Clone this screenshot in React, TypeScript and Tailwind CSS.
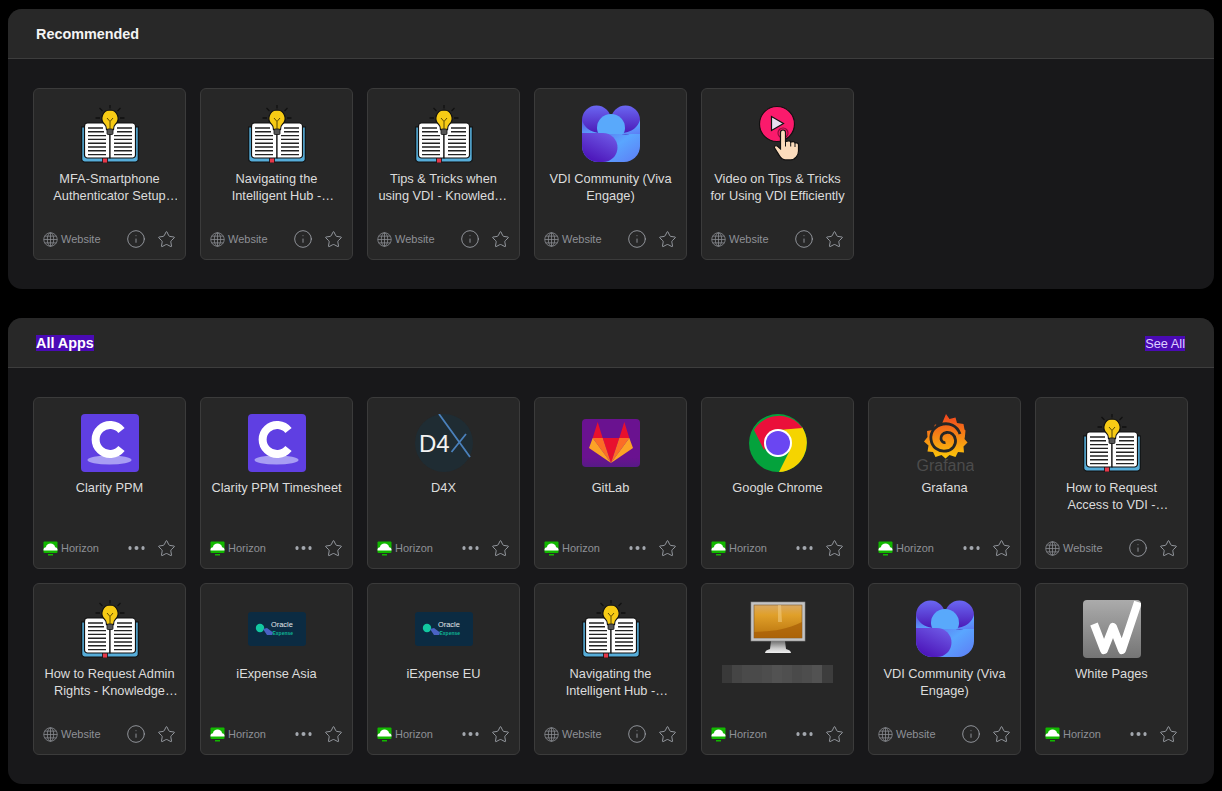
import { Info, Star } from 'lucide-react';
import { ReactNode } from 'react';

const BookIcon = () => (
  <svg viewBox="0 0 58 58" className="w-full h-full">
    <path d="M.7 22h56.600v32a3 3 0 0 1-3 3h-50.600a3 3 0 0 1-3-3z" fill="#56add9" stroke="#111" strokeWidth="1.200" />
    <rect x="21.500" y="52" width="5" height="6" fill="#e5394a" stroke="#111" strokeWidth="0.800" />
    <path d="M3.500 21a3 3 0 0 1 3-3h20.500a2 2 0 0 1 2 2v33H6.500a3 3 0 0 1-3-3z" fill="#fff" stroke="#111" strokeWidth="1.200" />
    <path d="M54.500 21a3 3 0 0 0-3-3H31a2 2 0 0 0-2 2v33h22.500a3 3 0 0 0 3-3z" fill="#fff" stroke="#111" strokeWidth="1.200" />
    <path d="M7 23h15M7 26.800h16M7 30.600h18M7 34.400h18M7 38.200h18M7 42h18M7 45.800h18M7 49.600h18M36 23h15M36 26.800h15M33 30.600h18M33 34.400h18M33 38.200h18M33 42h18M33 45.800h18M33 49.600h18" stroke="#222" strokeWidth="1.400" />
    <path d="M29 0v3.500M14.500 13h4.500M39 13h4.500M18.500 3l3 3M39.500 3l-3 3" stroke="#111" strokeWidth="1.300" />
    <path d="M29 5a8.300 8.300 0 0 1 5.200 14.600c-1.400 1.300-1.700 3-1.700 5h-7c0-2-.3-3.700-1.700-5A8.300 8.300 0 0 1 29 5z" fill="#f7cb15" stroke="#111" strokeWidth="1.200" />
    <path d="M26 13l3 3.500 3-3.500M29 16.500V24" fill="none" stroke="#5c4a05" strokeWidth="1" />
    <rect x="26" y="24" width="6" height="5.500" rx="1" fill="#555" stroke="#111" strokeWidth="0.800" />
  </svg>
);

const VivaIcon = () => (
  <svg viewBox="0 0 58 58" className="w-full h-full">
    <defs>
      <linearGradient id="vivaTop" x1="0" y1="0" x2="0" y2="1">
        <stop offset="0" stopColor="#6a67f2" />
        <stop offset="1" stopColor="#4a16b4" />
      </linearGradient>
      <linearGradient id="vivaBody" x1="0" y1="0" x2="1" y2="1">
        <stop offset="0" stopColor="#5c4fe0" />
        <stop offset="0.6" stopColor="#5aa6ff" />
        <stop offset="1" stopColor="#5d7cf5" />
      </linearGradient>
      <linearGradient id="vivaLeft" x1="0.8" y1="0" x2="0.2" y2="1">
        <stop offset="0" stopColor="#6e5ae6" />
        <stop offset="1" stopColor="#4a10b6" />
      </linearGradient>
    </defs>
    <path d="M0 15h58v26a16 16 0 0 1-16 16H16A16 16 0 0 1 0 41z" fill="url(#vivaBody)" />
    <circle cx="14.500" cy="15" r="14.500" fill="url(#vivaTop)" />
    <circle cx="43.500" cy="15" r="14.500" fill="url(#vivaTop)" />
    <path d="M0 15c3 9 10 14 29 14s26-5 29-14v14H0z" fill="url(#vivaBody)" />
    <path d="M15 23a14 14 0 0 1 28 0c0 3-1 5-2 6H17c-1-1-2-3-2-6z" fill="#59a9fb" />
    <path d="M0 28h21a14.500 14.500 0 0 1 0 29h-5A16 16 0 0 1 0 41z" fill="url(#vivaLeft)" />
  </svg>
);

const VideoIcon = () => (
  <svg viewBox="0 0 58 58" className="w-full h-full">
    <circle cx="28" cy="19" r="17.500" fill="#fb1a6c" stroke="#111" strokeWidth="1.200" />
    <path d="M22.500 11.500v14l12-7z" fill="#e8dff0" stroke="#111" strokeWidth="1.200" />
    <circle cx="34" cy="28" r="5" fill="none" stroke="#8a0f3d" strokeWidth="1.200" />
    <path d="M31.500 27.500a2.500 2.500 0 0 1 5 0v9l3-.5c1-.3 2 .2 2.200 1l2.300-.3c1-.1 1.800.4 2 1.200l1.500 0c1 0 2 1 2 2v6c0 4-3 9-8 9h-5c-3 0-4.500-1.500-6-4l-5-8c-.7-1.200 1-3 2.500-2l3.500 3z" fill="#fbdcbc" stroke="#111" strokeWidth="1.200" />
    <path d="M36.500 36.500v5M41.700 37v4.500M46 38v4" stroke="#111" strokeWidth="1" />
  </svg>
);

const ClarityIcon = () => (
  <svg viewBox="0 0 58 58" className="w-full h-full">
    <rect width="58" height="58" rx="4" fill="#5f3fe2" />
    <ellipse cx="28.500" cy="46" rx="22" ry="4.500" fill="#a89df3" />
    <path d="M40.500 16.500A14.500 14.500 0 1 0 40.500 34.500" fill="none" stroke="#fff" strokeWidth="8" />
  </svg>
);

const D4xIcon = () => (
  <svg viewBox="0 0 58 58" className="w-full h-full">
    <circle cx="29" cy="29" r="29" fill="#1f2c33" />
    <text x="4" y="38" fontSize="24" fill="#f2f2f2" fontFamily="Liberation Sans, sans-serif">D4</text>
    <path d="M24 0l31 43M36.500 38L51 20" stroke="#4a80bb" strokeWidth="1.800" />
  </svg>
);

const GitlabIcon = () => (
  <svg viewBox="0 0 58 58" className="w-full h-full">
    <defs>
      <linearGradient id="glBg" x1="0" y1="0" x2="0" y2="1">
        <stop offset="0" stopColor="#6a1290" />
        <stop offset="0.8" stopColor="#6a1290" />
        <stop offset="1" stopColor="#571a86" />
      </linearGradient>
    </defs>
    <rect x="0" y="5" width="58" height="48" rx="4" fill="url(#glBg)" />
    <path d="M10.700 24L15.700 8l5 16zM47.300 24l-5-16-5 16z" fill="#e8102e" />
    <path d="M20.700 24h16.600L29 49z" fill="#e8102e" />
    <path d="M10.700 24h10L29 49zM47.300 24h-10L29 49z" fill="#fc6d26" />
    <path d="M10.700 24L7 34l22 15zM47.300 24L51 34 29 49z" fill="#fca326" />
  </svg>
);

const ChromeIcon = () => (
  <svg viewBox="0 0 58 58" className="w-full h-full">
    <circle cx="29" cy="29" r="29" fill="#04a23c" />
    <path d="M53 13A29 29 0 0 1 30 58l10-20 -11-22z" fill="#f5d400" />
    <path d="M5 16A29 29 0 0 1 53.500 14L29 16 15 36z" fill="#ea0f3a" />
    <circle cx="29" cy="29" r="14" fill="#fff" />
    <circle cx="29" cy="29" r="12" fill="#6a46f2" />
  </svg>
);

const GrafanaIcon = () => (
  <svg viewBox="0 0 58 58" className="w-full h-full">
    <defs>
      <linearGradient id="grafana" x1="0" y1="0" x2="0" y2="1">
        <stop offset="0" stopColor="#f0431f" />
        <stop offset="1" stopColor="#fcc80a" />
      </linearGradient>
    </defs>
    <path d="M30 0l3.500 5 6-1.500 1.500 5.500 6.500 1 1 5.500 1 1-.5 5.500-.5 3 3 3.500-4 4 .5 6-6-.5-2.500 5-6-2-4 3.500-4-3.500-6 2-2.500-5-5.500-.5 1-6-4.500-4 3.500-4.500-.5-6 6-1 2-5.500 6 1.500z" fill="url(#grafana)" />
    <path d="M44 20C41 11 33 9 27 10c-8 1.500-13 8-12 15.500 1 7.500 7 12.500 15 11.500 6.500-.8 10-6 9.500-11-.5-5-4.500-8-9-7.500-4 .5-6 3.500-5.500 6.500.4 2.500 2.500 4 4.500 3.500" fill="none" stroke="#262626" strokeWidth="2.800" />
    <text x="0.500" y="57" fontSize="16" fill="#4c4c4c" fontFamily="Liberation Sans, sans-serif">Grafana</text>
  </svg>
);

const OracleIcon = () => (
  <svg viewBox="0 0 58 58" className="w-full h-full">
    <rect x="0" y="12" width="58" height="34" rx="3" fill="#0b2b42" />
    <circle cx="12" cy="28" r="4.200" fill="#12c7a0" />
    <path d="M15 29l4-1 6 4.500-1 2.500h-5z" fill="#4a62c4" />
    <text x="23" y="27" fontSize="7.400" fill="#e4e8ea" fontFamily="Liberation Sans, sans-serif">Oracle</text>
    <text x="24.500" y="35" fontSize="5" fontWeight="700" fill="#0fb394" fontFamily="Liberation Sans, sans-serif">Expense</text>
  </svg>
);

const MonitorIcon = () => (
  <svg viewBox="0 0 58 58" className="w-full h-full">
    <defs>
      <linearGradient id="screen" x1="0" y1="0" x2="0" y2="1">
        <stop offset="0" stopColor="#d9a862" />
        <stop offset="0.3" stopColor="#e0a02a" />
        <stop offset="1" stopColor="#b8720c" />
      </linearGradient>
      <linearGradient id="stand" x1="0" y1="0" x2="0" y2="1">
        <stop offset="0" stopColor="#6f6f6f" />
        <stop offset="0.6" stopColor="#c9c9c9" />
        <stop offset="1" stopColor="#f0f0f0" />
      </linearGradient>
    </defs>
    <path d="M22 41h14l1 8c3 .8 5 2 5 4H16c0-2 2-3.200 5-4z" fill="url(#stand)" />
    <rect x="2" y="2" width="54" height="39" fill="#c4c4c4" stroke="#8d8d8d" strokeWidth="0.600" />
    <rect x="5" y="5" width="48" height="33" fill="url(#screen)" stroke="#7d5a30" strokeWidth="0.600" />
    <path d="M29 5h3l1 17h-4z" fill="#f4d28c" opacity="0.500" />
    <path d="M5 38v-6c16-1 30-1 48-10v16z" fill="#a65c06" opacity="0.700" />
  </svg>
);

const WhitePagesIcon = () => (
  <svg viewBox="0 0 58 58" className="w-full h-full">
    <defs>
      <linearGradient id="wp" x1="0" y1="0" x2="0" y2="1">
        <stop offset="0" stopColor="#ababab" />
        <stop offset="1" stopColor="#757575" />
      </linearGradient>
    </defs>
    <rect width="58" height="58" rx="4" fill="url(#wp)" />
    <path d="M11 24l10 26 9-23 9 23L55 2" fill="none" stroke="#fff" strokeWidth="8" strokeLinejoin="round" />
  </svg>
);

const GlobeIcon = () => (
  <svg viewBox="0 0 16 16" className="w-[15px] h-[15px] shrink-0" fill="none" stroke="#8e9096" strokeWidth="0.800">
    <circle cx="8" cy="8" r="7.200" />
    <ellipse cx="8" cy="8" rx="3.400" ry="7.200" />
    <path d="M8 .8v14.400M.8 8h14.400M1.700 4.400h12.600M1.700 11.600h12.600" />
  </svg>
);

const HorizonIcon = () => (
  <svg viewBox="0 0 15 15" className="w-[15px] h-[15px] shrink-0">
    <rect x="0.500" y="0.500" width="14" height="11.500" rx="1" fill="#12b800" />
    <path d="M0.500 9.500h14v-1c0-1.300-1-2.300-2.400-2.300C11.700 3.900 9.800 2.600 7.500 2.600S3.300 3.900 2.900 6.200C1.500 6.200.5 7.200.5 8.500z" fill="#fff" />
    <rect x="5" y="13" width="5" height="1.500" fill="#12b800" />
  </svg>
);

const RedactedName = () => (
  <div className="flex h-[18px] w-[111px] mx-auto">
    <div className="w-[10px] bg-[#393939]" />
    <div className="w-[10px] bg-[#454545]" />
    <div className="w-[20px] bg-[#4a4a4a]" />
    <div className="w-[10px] bg-[#4d4d4d]" />
    <div className="w-[10px] bg-[#525252]" />
    <div className="w-[10px] bg-[#4f4f4f]" />
    <div className="w-[10px] bg-[#4a4a4a]" />
    <div className="w-[10px] bg-[#4d4d4d]" />
    <div className="w-[10px] bg-[#525252]" />
    <div className="w-[11px] bg-[#3d3d3d]" />
  </div>
);

interface AppI {
  name?: string;
  icon: ReactNode;
  type: 'Website' | 'Horizon';
}

const AppCard = ({ app }: { app: AppI }) => (
  <div className="h-[172px] rounded-md border border-solid border-[#3b3b3b] bg-[#272727] flex flex-col pt-4">
    <div className="w-[58px] h-[58px] mx-auto">{app.icon}</div>
    <div className="mt-[7px] px-2 h-[34px] text-center text-[12.800px] leading-[17px] text-[#dcdcdc]">
      {app.name ? <p className="line-clamp-2">{app.name}</p> : <RedactedName />}
    </div>
    <div className="mt-auto mb-[10px] pl-[9px] pr-[9px] h-5 flex items-center">
      {app.type === 'Website' ? <GlobeIcon /> : <HorizonIcon />}
      <span className="ml-[3px] text-[11px] text-[#8e9096]">{app.type}</span>
      <div className="ml-auto w-5 flex justify-center">
        {app.type === 'Website' ? (
          <Info size={20} strokeWidth={1} className="text-[#a3a7ae]" />
        ) : (
          <div className="flex gap-[3px] translate-x-[0.5px]">
            <span className="w-[3.500px] h-[3.500px] rounded-full bg-[#a3a7ae]" />
            <span className="w-[3.500px] h-[3.500px] rounded-full bg-[#a3a7ae]" />
            <span className="w-[3.500px] h-[3.500px] rounded-full bg-[#a3a7ae]" />
          </div>
        )}
      </div>
      <Star size={19} strokeWidth={1.100} className="ml-[10.500px] mr-[0.5px] text-[#a3a7ae]" />
    </div>
  </div>
);

const recommended: AppI[] = [
  { name: 'MFA-Smartphone Authenticator Setup Guide', icon: <BookIcon />, type: 'Website' },
  { name: 'Navigating the Intelligent Hub - Knowledge Base', icon: <BookIcon />, type: 'Website' },
  { name: 'Tips & Tricks when using VDI - Knowledge Base', icon: <BookIcon />, type: 'Website' },
  { name: 'VDI Community (Viva Engage)', icon: <VivaIcon />, type: 'Website' },
  { name: 'Video on Tips & Tricks for Using VDI Efficiently', icon: <VideoIcon />, type: 'Website' },
];

const allApps: AppI[] = [
  { name: 'Clarity PPM', icon: <ClarityIcon />, type: 'Horizon' },
  { name: 'Clarity PPM Timesheet', icon: <ClarityIcon />, type: 'Horizon' },
  { name: 'D4X', icon: <D4xIcon />, type: 'Horizon' },
  { name: 'GitLab', icon: <GitlabIcon />, type: 'Horizon' },
  { name: 'Google Chrome', icon: <ChromeIcon />, type: 'Horizon' },
  { name: 'Grafana', icon: <GrafanaIcon />, type: 'Horizon' },
  { name: 'How to Request Access to VDI - Knowledge Base', icon: <BookIcon />, type: 'Website' },
  { name: 'How to Request Admin Rights - Knowledge Base', icon: <BookIcon />, type: 'Website' },
  { name: 'iExpense Asia', icon: <OracleIcon />, type: 'Horizon' },
  { name: 'iExpense EU', icon: <OracleIcon />, type: 'Horizon' },
  { name: 'Navigating the Intelligent Hub - Knowledge Base', icon: <BookIcon />, type: 'Website' },
  { icon: <MonitorIcon />, type: 'Horizon' },
  { name: 'VDI Community (Viva Engage)', icon: <VivaIcon />, type: 'Website' },
  { name: 'White Pages', icon: <WhitePagesIcon />, type: 'Horizon' },
];

const Section = ({ header, action, apps }: { header: ReactNode; action?: ReactNode; apps: AppI[] }) => (
  <section className="rounded-[14px] bg-[#18181a] overflow-hidden">
    <div className="h-[50px] pt-px px-7 flex items-center justify-between bg-[#282828] border-b border-solid border-[#3d3d3d]">
      <h2 className="text-[14.400px] leading-4 font-bold text-[#f4f4f4]">{header}</h2>
      {action}
    </div>
    <div className="pl-[25px] pr-[26px] pt-[29px] pb-[29px] grid grid-cols-[repeat(7,153px)] gap-[14px]">
      {apps.map((app, i) => (
        <AppCard key={i} app={app} />
      ))}
    </div>
  </section>
);

const App = () => {
  return (
    <div className="min-h-[791px] bg-black px-2 pt-[9px] flex flex-col gap-[29px] font-['Liberation_Sans',sans-serif]">
      <Section header="Recommended" apps={recommended} />
      <Section
        header={<span className="bg-[#4a0ab5] text-white">All Apps</span>}
        action={<a className="bg-[#4a0ab5] text-[12.800px] leading-[15px] text-[#ddd0ff] mr-px">See All</a>}
        apps={allApps}
      />
    </div>
  );
};

export default App;
